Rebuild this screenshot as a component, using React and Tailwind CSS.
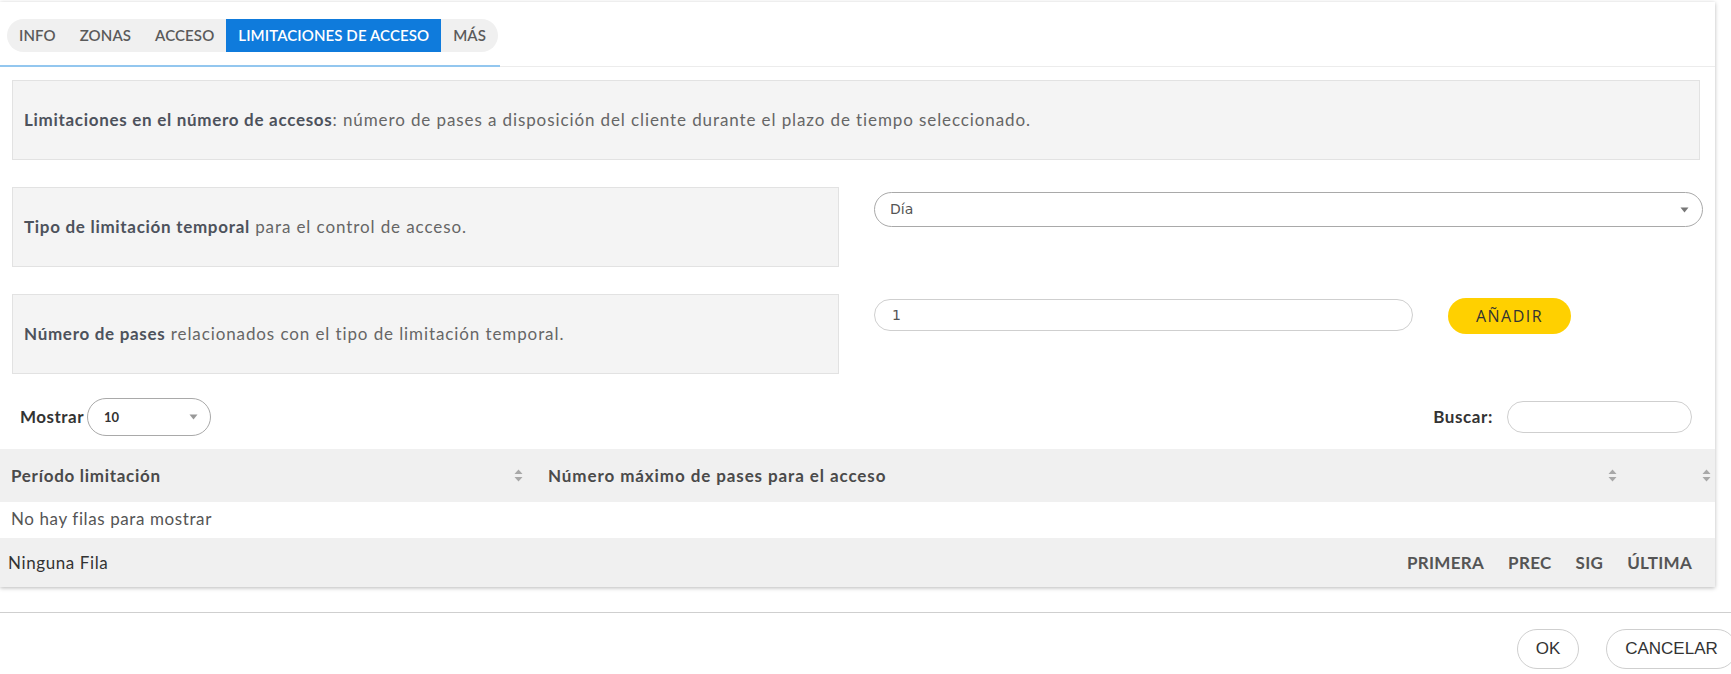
import React from 'react';

// Pestañas del formulario
const tabs = ['Info', 'Zonas', 'Acceso', 'Limitaciones de acceso', 'Más'];

const SortIcon = () => (
    <svg width="9" height="13" viewBox="0 0 9 13" className="shrink-0">
        <path d="M4.5 0.5 L8.5 5 L0.5 5 Z" fill="#a8a8a8" />
        <path d="M4.5 12.5 L8.5 8 L0.5 8 Z" fill="#a8a8a8" />
    </svg>
);

const Caret = ({ color = '#777' }) => (
    <svg width="9" height="6" viewBox="0 0 9 6">
        <path d="M0.5 0.5 L8.5 0.5 L4.5 5.5 Z" fill={color} />
    </svg>
);

const InfoBox = ({ title, children, className = '' }) => (
    <div className={`flex items-center bg-[#f4f4f4] border border-[#e2e2e2] px-[11px] h-[80px] text-[17px] tracking-[0.9px] text-[#666] ${className}`}>
        <p>
            <span className="font-bold tracking-[0.7px] text-[#4d525c]">{title}</span>
            {children}
        </p>
    </div>
);

const App = () => {
    return (
        <div className="w-[1731px] h-[674px] overflow-hidden bg-white font-['Lato',sans-serif]">
            <div className="w-[1715px] mt-[2px] bg-white shadow-[0_1px_4px_rgba(0,0,0,0.28)]">
                {/* --- Pestañas --- */}
                <div className="flex border-b border-[#ececec] pt-[17px]">
                    <div className="w-[500px] border-b-2 border-[#93c7ef] -mb-px pb-[13px] pl-[7px] whitespace-nowrap">
                        <div className="inline-flex h-[33px] rounded-full bg-[#f0f0f0] overflow-hidden">
                            {tabs.map((t, i) => (
                                <div
                                    key={t}
                                    className={`flex shrink-0 items-center px-[12px] text-[15px] tracking-[0.1px] font-semibold uppercase whitespace-nowrap ${i === 3 ? 'bg-[#0f7bdc] text-white' : 'text-[#5a5a5a]'}`}
                                >
                                    {t}
                                </div>
                            ))}
                        </div>
                    </div>
                </div>

                <div className="px-[12px] pt-[13px]">
                    <InfoBox title="Limitaciones en el número de accesos" className="w-[1688px]">
                        : número de pases a disposición del cliente durante el plazo de tiempo seleccionado.
                    </InfoBox>

                    <div className="flex mt-[27px]">
                        <InfoBox title="Tipo de limitación temporal" className="w-[827px]">
                            {' '}para el control de acceso.
                        </InfoBox>
                        <div className="flex-1 ml-[35px] pt-[5px]">
                            <div className="flex items-center justify-between h-[35px] rounded-full border border-[#a9a9a9] pl-[15px] pr-[13px] text-[14px] text-[#555] font-['DejaVu_Sans',sans-serif]">
                                <span>Día</span>
                                <Caret />
                            </div>
                        </div>
                    </div>

                    <div className="flex mt-[27px]">
                        <InfoBox title="Número de pases" className="w-[827px]">
                            {' '}relacionados con el tipo de limitación temporal.
                        </InfoBox>
                        <div className="flex-1 ml-[35px] pt-[4px] flex items-start">
                            <div className="flex items-center w-[539px] h-[32px] mt-[1px] rounded-full border border-[#cfcfcf] pl-[17px] text-[14px] text-[#555] font-['DejaVu_Sans',sans-serif]">
                                1
                            </div>
                            <button className="ml-[35px] h-[36px] w-[123px] rounded-full bg-[#ffd000] text-[16px] tracking-[1.5px] text-[#333] font-['Open_Sans',sans-serif]">
                                AÑADIR
                            </button>
                        </div>
                    </div>

                    {/* --- Controles de la tabla --- */}
                    <div className="flex items-center justify-between mt-[24px] h-[38px] pl-[8px] pr-[11px]">
                        <div className="flex items-center">
                            <span className="text-[17px] tracking-[0.5px] font-bold text-[#333]">Mostrar</span>
                            <div className="ml-[3px] flex items-center justify-between w-[124px] h-[38px] rounded-full border border-[#a9a9a9] pl-[16px] pr-[12px]">
                                <span className="text-[13px] font-bold text-[#333] pt-[2px]">10</span>
                                <Caret color="#999" />
                            </div>
                        </div>
                        <div className="flex items-center">
                            <span className="text-[17px] tracking-[0.6px] font-bold text-[#333]">Buscar:</span>
                            <div className="ml-[14px] w-[185px] h-[32px] rounded-full border border-[#cfcfcf]" />
                        </div>
                    </div>
                </div>

                {/* --- Tabla --- */}
                <div className="mt-[13px]">
                    <div className="flex items-center h-[53px] bg-[#f0f0f0] text-[17px] tracking-[0.9px] font-bold text-[#4a4a4a]">
                        <div className="w-[537px] flex items-center justify-between pl-[11px] pr-[14px] tracking-[0.7px]">
                            <span>Período limitación</span>
                            <SortIcon />
                        </div>
                        <div className="w-[1088px] flex items-center justify-between pl-[11px] pr-[8px]">
                            <span>Número máximo de pases para el acceso</span>
                            <SortIcon />
                        </div>
                        <div className="flex-1 flex items-center justify-end pr-[4px]">
                            <SortIcon />
                        </div>
                    </div>
                    <div className="flex items-center h-[36px] pl-[11px] pb-[3px] text-[17px] tracking-[0.6px] text-[#555]">
                        No hay filas para mostrar
                    </div>
                    <div className="flex items-center justify-between h-[49px] bg-[#f0f0f0] pl-[8px] pr-[23px] text-[17px]">
                        <span className="text-[#333] tracking-[0.6px]">Ninguna Fila</span>
                        <div className="flex items-center gap-[24px] font-bold uppercase text-[#555] tracking-[0.3px]">
                            <span>Primera</span>
                            <span>Prec</span>
                            <span>Sig</span>
                            <span>Última</span>
                        </div>
                    </div>
                </div>
            </div>

            {/* --- Pie del diálogo --- */}
            <div className="mt-[25px] border-t border-[#cfcfcf] pt-[16px]">
                <div className="flex justify-end gap-[27px] w-[1737px] font-['Liberation_Sans',sans-serif]">
                    <button className="h-[40px] w-[62px] rounded-full border border-[#cfcfcf] bg-white text-[17px] text-[#333]">
                        OK
                    </button>
                    <button className="h-[40px] w-[131px] rounded-full border border-[#cfcfcf] bg-white text-[17px] text-[#333]">
                        CANCELAR
                    </button>
                </div>
            </div>
        </div>
    );
};

export default App;
